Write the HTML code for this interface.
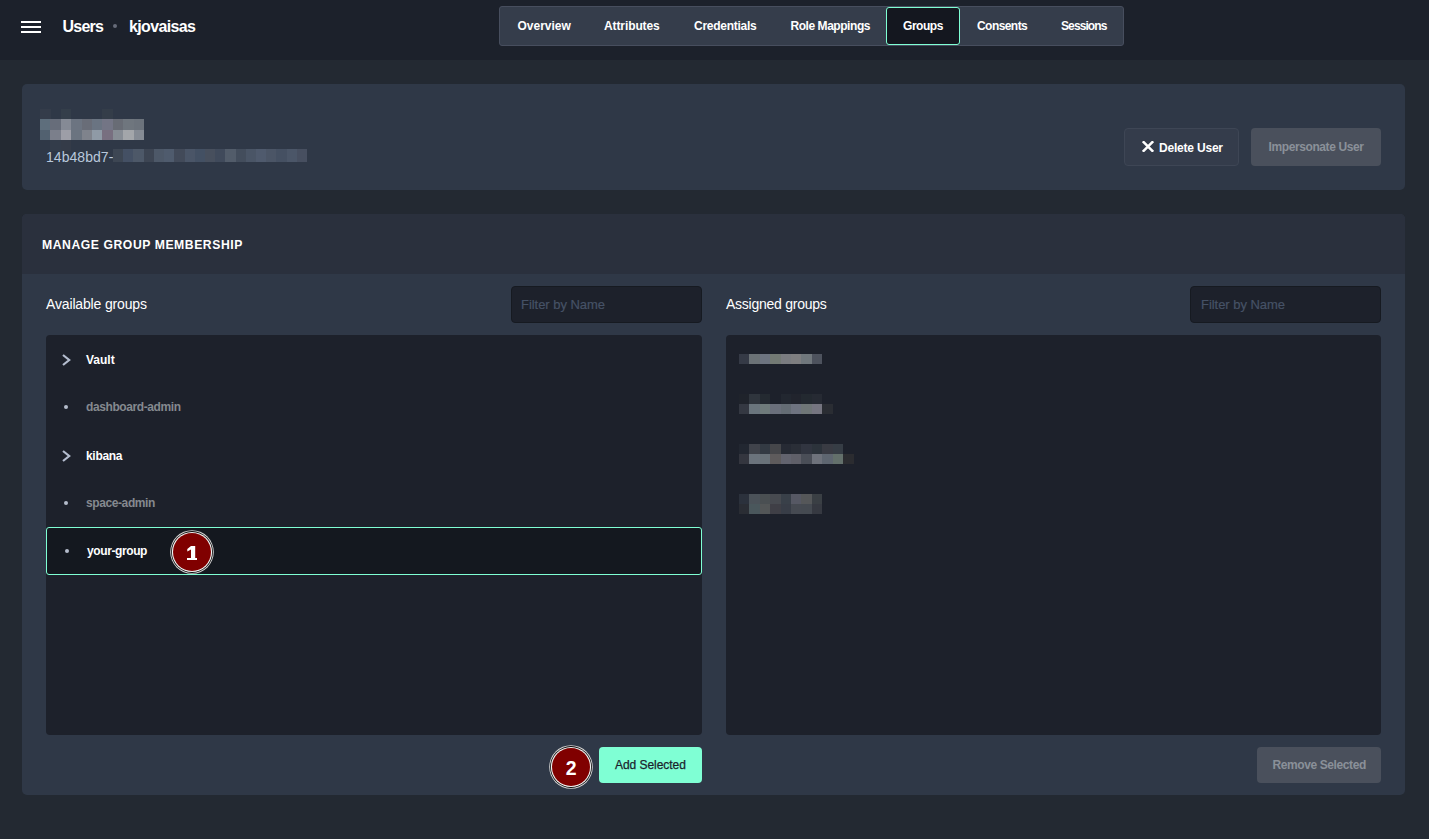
<!DOCTYPE html>
<html>
<head>
<meta charset="utf-8">
<style>
*{box-sizing:border-box;margin:0;padding:0}
html,body{width:1429px;height:839px;overflow:hidden}
body{background:#232932;font-family:"Liberation Sans",sans-serif;position:relative;color:#fff}
.a{position:absolute}
.t{position:absolute;white-space:nowrap}
.b12{font-size:12px;line-height:12px;font-weight:700}
#hdr{left:0;top:0;width:1429px;height:60px;background:#1c212b}
.hb{position:absolute;left:21px;width:20px;height:2px;background:#fff}
#tabs{left:499px;top:6px;width:625px;height:40px;background:#353d4b;border:1px solid #474e5e;border-radius:3px}
#acttab{left:886px;top:7px;width:74px;height:38px;background:#14171f;border:1px solid #7fffd4;border-radius:3px}
.card{position:absolute;left:22px;width:1383px;background:#2f3847;border-radius:5px;overflow:hidden}
.blk{position:absolute;height:11px}
.btn{position:absolute;border-radius:4px}
.inp{position:absolute;width:191px;height:37px;top:286px;background:#1d212b;border:1px solid #161a21;border-radius:4px}
.ph{font-size:13px;line-height:13px;color:#465266;-webkit-text-stroke:0.2px #465266}
.panel{position:absolute;top:335px;height:400px;width:656px;background:#1d212b;border-radius:4px}
.chev{position:absolute;left:62px;width:9px;height:12px}
.dot{position:absolute;width:4.6px;height:4.6px;border-radius:50%;background:#b4bccc}
.badge{position:absolute;width:44px;height:44px;border-radius:50%;border:1px solid #d8d8d8;background:#161a22}
.badge .in{position:absolute;left:2px;top:2px;width:38px;height:38px;border-radius:50%;background:#800000;border:1.5px solid #fff}
.badge .n{position:absolute;left:0;top:0;width:38px;height:38px;text-align:center;font-weight:700;color:#fff}
</style>
</head>
<body>
<!-- header -->
<div id="hdr" class="a"></div>
<div class="hb" style="top:21px"></div>
<div class="hb" style="top:26px"></div>
<div class="hb" style="top:31px"></div>
<div class="t" style="left:62.5px;top:19.3px;font-size:16px;line-height:16px;font-weight:700;letter-spacing:-0.75px">Users</div>
<div class="a" style="left:113px;top:24px;width:4px;height:4px;border-radius:50%;background:#666b79"></div>
<div class="t" style="left:129px;top:19.3px;font-size:16px;line-height:16px;font-weight:700;letter-spacing:-0.65px">kjovaisas</div>

<!-- tabs -->
<div id="tabs" class="a"></div>
<div id="acttab" class="a"></div>
<div class="t b12" style="left:517.5px;top:19.8px">Overview</div>
<div class="t b12" style="left:604px;top:19.8px;letter-spacing:-0.1px">Attributes</div>
<div class="t b12" style="left:694px;top:19.8px;letter-spacing:-0.27px">Credentials</div>
<div class="t b12" style="left:790.5px;top:19.8px;letter-spacing:-0.45px">Role Mappings</div>
<div class="t b12" style="left:903px;top:19.8px;letter-spacing:-0.45px">Groups</div>
<div class="t b12" style="left:977px;top:19.8px;letter-spacing:-0.56px">Consents</div>
<div class="t b12" style="left:1061px;top:19.8px;letter-spacing:-0.9px">Sessions</div>

<!-- card 1 -->
<div class="card" style="top:84px;height:106px"></div>
<div class="a" style="left:40.0px;top:109.0px;width:10.7px;height:10.4px;background:#343c4a"></div>
<div class="a" style="left:60.8px;top:109.0px;width:10.7px;height:10.4px;background:#343e4a"></div>
<div class="a" style="left:102.4px;top:109.0px;width:10.7px;height:10.4px;background:#343d49"></div>
<div class="a" style="left:40.0px;top:119.4px;width:10.7px;height:10.4px;background:#5e6e7c"></div>
<div class="a" style="left:50.4px;top:119.4px;width:10.7px;height:10.4px;background:#676d7a"></div>
<div class="a" style="left:60.8px;top:119.4px;width:10.7px;height:10.4px;background:#858a95"></div>
<div class="a" style="left:71.2px;top:119.4px;width:10.7px;height:10.4px;background:#6c7481"></div>
<div class="a" style="left:81.6px;top:119.4px;width:10.7px;height:10.4px;background:#696d78"></div>
<div class="a" style="left:92.0px;top:119.4px;width:10.7px;height:10.4px;background:#6a7482"></div>
<div class="a" style="left:102.4px;top:119.4px;width:10.7px;height:10.4px;background:#737585"></div>
<div class="a" style="left:112.8px;top:119.4px;width:10.7px;height:10.4px;background:#686c75"></div>
<div class="a" style="left:123.2px;top:119.4px;width:10.7px;height:10.4px;background:#6f767e"></div>
<div class="a" style="left:133.6px;top:119.4px;width:10.7px;height:10.4px;background:#6c737c"></div>
<div class="a" style="left:40.0px;top:129.8px;width:10.7px;height:10.4px;background:#526170"></div>
<div class="a" style="left:50.4px;top:129.8px;width:10.7px;height:10.4px;background:#7b7f8b"></div>
<div class="a" style="left:60.8px;top:129.8px;width:10.7px;height:10.4px;background:#9d9ea7"></div>
<div class="a" style="left:71.2px;top:129.8px;width:10.7px;height:10.4px;background:#6b7480"></div>
<div class="a" style="left:81.6px;top:129.8px;width:10.7px;height:10.4px;background:#7f838c"></div>
<div class="a" style="left:92.0px;top:129.8px;width:10.7px;height:10.4px;background:#8f9aa6"></div>
<div class="a" style="left:102.4px;top:129.8px;width:10.7px;height:10.4px;background:#786f80"></div>
<div class="a" style="left:112.8px;top:129.8px;width:10.7px;height:10.4px;background:#878d95"></div>
<div class="a" style="left:123.2px;top:129.8px;width:10.7px;height:10.4px;background:#a3a6aa"></div>
<div class="a" style="left:133.6px;top:129.8px;width:10.7px;height:10.4px;background:#858b94"></div>
<div class="a" style="left:50.4px;top:140.2px;width:10.7px;height:10.4px;background:#333c4a"></div>
<div class="a" style="left:60.8px;top:140.2px;width:10.7px;height:10.4px;background:#343b48"></div>
<div class="t" style="left:46px;top:149.7px;font-size:14px;line-height:14px;color:#b9c8dc;letter-spacing:0.05px">14b48bd7-</div>
<div class="a" style="left:113.0px;top:149.0px;width:10.5px;height:13.0px;background:#3d4653"></div>
<div class="a" style="left:123.2px;top:149.0px;width:10.5px;height:13.0px;background:#445064"></div>
<div class="a" style="left:133.4px;top:149.0px;width:10.5px;height:13.0px;background:#4d5868"></div>
<div class="a" style="left:143.6px;top:149.0px;width:10.5px;height:13.0px;background:#3d4553"></div>
<div class="a" style="left:153.8px;top:149.0px;width:10.5px;height:13.0px;background:#4d5868"></div>
<div class="a" style="left:164.1px;top:149.0px;width:10.5px;height:13.0px;background:#4f5b6d"></div>
<div class="a" style="left:174.3px;top:149.0px;width:10.5px;height:13.0px;background:#424a59"></div>
<div class="a" style="left:184.5px;top:149.0px;width:10.5px;height:13.0px;background:#4a5567"></div>
<div class="a" style="left:194.7px;top:149.0px;width:10.5px;height:13.0px;background:#435063"></div>
<div class="a" style="left:204.9px;top:149.0px;width:10.5px;height:13.0px;background:#474f5d"></div>
<div class="a" style="left:215.1px;top:149.0px;width:10.5px;height:13.0px;background:#404a5b"></div>
<div class="a" style="left:225.3px;top:149.0px;width:10.5px;height:13.0px;background:#525c6a"></div>
<div class="a" style="left:235.5px;top:149.0px;width:10.5px;height:13.0px;background:#434d5c"></div>
<div class="a" style="left:245.7px;top:149.0px;width:10.5px;height:13.0px;background:#4a5566"></div>
<div class="a" style="left:255.9px;top:149.0px;width:10.5px;height:13.0px;background:#4f5a6d"></div>
<div class="a" style="left:266.1px;top:149.0px;width:10.5px;height:13.0px;background:#4b5566"></div>
<div class="a" style="left:276.4px;top:149.0px;width:10.5px;height:13.0px;background:#455062"></div>
<div class="a" style="left:286.6px;top:149.0px;width:10.5px;height:13.0px;background:#4b5668"></div>
<div class="a" style="left:296.8px;top:149.0px;width:10.5px;height:13.0px;background:#474f60"></div>

<div class="btn" style="left:1124px;top:128px;width:115px;height:38px;background:#343c4b;border:1px solid #3e4655"></div>
<svg class="a" style="left:1142px;top:141.4px" width="12" height="11" viewBox="0 0 12 11"><path d="M0.8 0.3 L11.2 10.7 M11.2 0.3 L0.8 10.7" stroke="#fff" stroke-width="2.5" stroke-linecap="butt"/></svg>
<div class="t b12" style="left:1159px;top:141.6px;letter-spacing:-0.2px">Delete User</div>
<div class="btn" style="left:1251px;top:128px;width:130px;height:38px;background:#4a505c"></div>
<div class="t b12" style="left:1268.5px;top:140.8px;color:#8a9099;letter-spacing:-0.4px">Impersonate User</div>

<!-- card 2 -->
<div class="card" style="top:214px;height:581px">
  <div class="a" style="left:0;top:0;width:1383px;height:60px;background:#2a303d"></div>
</div>
<div class="t" style="left:42px;top:239px;font-size:12.2px;line-height:12.2px;font-weight:700;letter-spacing:0.56px">MANAGE GROUP MEMBERSHIP</div>

<div class="t" style="left:46px;top:297.1px;font-size:14px;line-height:14px;letter-spacing:-0.15px">Available groups</div>
<div class="inp" style="left:511px"></div>
<div class="t ph" style="left:521px;top:298px;letter-spacing:-0.04px">Filter by Name</div>

<div class="t" style="left:726px;top:297.1px;font-size:14px;line-height:14px;letter-spacing:-0.25px">Assigned groups</div>
<div class="inp" style="left:1190px"></div>
<div class="t ph" style="left:1201px;top:298px;letter-spacing:-0.04px">Filter by Name</div>

<div class="panel" style="left:46px"></div>
<div class="panel" style="left:726px;width:655px"></div>

<!-- available list -->
<svg class="chev" style="top:354px" viewBox="0 0 9 12"><path d="M1 1 L7.2 6 L1 11" fill="none" stroke="#b4bdcf" stroke-width="2.2"/></svg>
<div class="t b12" style="left:86px;top:353.8px">Vault</div>
<div class="dot" style="left:63.5px;top:404.5px"></div>
<div class="t b12" style="left:86px;top:400.8px;color:#85898f;letter-spacing:-0.4px">dashboard-admin</div>
<svg class="chev" style="top:450px" viewBox="0 0 9 12"><path d="M1 1 L7.2 6 L1 11" fill="none" stroke="#b4bdcf" stroke-width="2.2"/></svg>
<div class="t b12" style="left:86px;top:449.8px;letter-spacing:-0.3px">kibana</div>
<div class="dot" style="left:63.5px;top:500.5px"></div>
<div class="t b12" style="left:86px;top:496.8px;color:#85898f;letter-spacing:-0.4px">space-admin</div>

<div class="a" style="left:46px;top:527px;width:656px;height:48px;background:#14181f;border:1px solid #7fffd4;border-radius:3px"></div>
<div class="dot" style="left:64.5px;top:548.5px"></div>
<div class="t b12" style="left:87px;top:544.8px;letter-spacing:-0.4px">your-group</div>

<svg class="a" style="left:170px;top:530px" width="44" height="44" viewBox="0 0 44 44"><circle cx="22" cy="22" r="21.8" fill="#d6d6d6"/><circle cx="22" cy="22" r="20.9" fill="#0a0a0a"/><circle cx="22" cy="22" r="20.1" fill="#f4f4f4"/><circle cx="22" cy="22" r="19" fill="#800000"/><path d="M21 16 L25.2 16 L25.2 28 L27 28 L27 30 L17 30 L17 28 L21 28 L21 19.6 L17.3 21.4 L17.3 19 Z" fill="#fff"/></svg>

<!-- assigned list -->
<div class="a" style="left:739.0px;top:354.0px;width:10.7px;height:10.0px;background:#353a46"></div>
<div class="a" style="left:749.4px;top:354.0px;width:10.7px;height:10.0px;background:#6b7276"></div>
<div class="a" style="left:759.8px;top:354.0px;width:10.7px;height:10.0px;background:#6d7480"></div>
<div class="a" style="left:770.2px;top:354.0px;width:10.7px;height:10.0px;background:#737a74"></div>
<div class="a" style="left:780.6px;top:354.0px;width:10.7px;height:10.0px;background:#7a7c80"></div>
<div class="a" style="left:791.0px;top:354.0px;width:10.7px;height:10.0px;background:#7e7e80"></div>
<div class="a" style="left:801.4px;top:354.0px;width:10.7px;height:10.0px;background:#70777c"></div>
<div class="a" style="left:811.8px;top:354.0px;width:10.7px;height:10.0px;background:#4d525d"></div>
<div class="a" style="left:739.0px;top:394.0px;width:10.7px;height:10.0px;background:#1f232b"></div>
<div class="a" style="left:749.4px;top:394.0px;width:10.7px;height:10.0px;background:#2f353d"></div>
<div class="a" style="left:759.8px;top:394.0px;width:10.7px;height:10.0px;background:#242a31"></div>
<div class="a" style="left:780.6px;top:394.0px;width:10.7px;height:10.0px;background:#222730"></div>
<div class="a" style="left:791.0px;top:394.0px;width:10.7px;height:10.0px;background:#21242d"></div>
<div class="a" style="left:801.4px;top:394.0px;width:10.7px;height:10.0px;background:#232930"></div>
<div class="a" style="left:811.8px;top:394.0px;width:10.7px;height:10.0px;background:#262a33"></div>
<div class="a" style="left:739.0px;top:404.0px;width:10.7px;height:10.0px;background:#343842"></div>
<div class="a" style="left:749.4px;top:404.0px;width:10.7px;height:10.0px;background:#6a757d"></div>
<div class="a" style="left:759.8px;top:404.0px;width:10.7px;height:10.0px;background:#6f7b7b"></div>
<div class="a" style="left:770.2px;top:404.0px;width:10.7px;height:10.0px;background:#6a6f7b"></div>
<div class="a" style="left:780.6px;top:404.0px;width:10.7px;height:10.0px;background:#646c74"></div>
<div class="a" style="left:791.0px;top:404.0px;width:10.7px;height:10.0px;background:#6e7380"></div>
<div class="a" style="left:801.4px;top:404.0px;width:10.7px;height:10.0px;background:#6f7677"></div>
<div class="a" style="left:811.8px;top:404.0px;width:10.7px;height:10.0px;background:#757580"></div>
<div class="a" style="left:822.2px;top:404.0px;width:10.7px;height:10.0px;background:#2a2d33"></div>
<div class="a" style="left:739.0px;top:444.0px;width:10.7px;height:10.0px;background:#222731"></div>
<div class="a" style="left:749.4px;top:444.0px;width:10.7px;height:10.0px;background:#40434b"></div>
<div class="a" style="left:759.8px;top:444.0px;width:10.7px;height:10.0px;background:#333a43"></div>
<div class="a" style="left:770.2px;top:444.0px;width:10.7px;height:10.0px;background:#45464a"></div>
<div class="a" style="left:780.6px;top:444.0px;width:10.7px;height:10.0px;background:#262a34"></div>
<div class="a" style="left:791.0px;top:444.0px;width:10.7px;height:10.0px;background:#2a2e37"></div>
<div class="a" style="left:801.4px;top:444.0px;width:10.7px;height:10.0px;background:#313540"></div>
<div class="a" style="left:811.8px;top:444.0px;width:10.7px;height:10.0px;background:#2c333b"></div>
<div class="a" style="left:822.2px;top:444.0px;width:10.7px;height:10.0px;background:#393b43"></div>
<div class="a" style="left:832.6px;top:444.0px;width:10.7px;height:10.0px;background:#363d45"></div>
<div class="a" style="left:739.0px;top:454.0px;width:10.7px;height:10.0px;background:#34363f"></div>
<div class="a" style="left:749.4px;top:454.0px;width:10.7px;height:10.0px;background:#6b737c"></div>
<div class="a" style="left:759.8px;top:454.0px;width:10.7px;height:10.0px;background:#697279"></div>
<div class="a" style="left:770.2px;top:454.0px;width:10.7px;height:10.0px;background:#5e5b5c"></div>
<div class="a" style="left:780.6px;top:454.0px;width:10.7px;height:10.0px;background:#62636e"></div>
<div class="a" style="left:791.0px;top:454.0px;width:10.7px;height:10.0px;background:#5f5f68"></div>
<div class="a" style="left:801.4px;top:454.0px;width:10.7px;height:10.0px;background:#4a4e57"></div>
<div class="a" style="left:811.8px;top:454.0px;width:10.7px;height:10.0px;background:#6e727b"></div>
<div class="a" style="left:822.2px;top:454.0px;width:10.7px;height:10.0px;background:#5e6670"></div>
<div class="a" style="left:832.6px;top:454.0px;width:10.7px;height:10.0px;background:#63706b"></div>
<div class="a" style="left:843.0px;top:454.0px;width:10.7px;height:10.0px;background:#2b2c30"></div>
<div class="a" style="left:739.0px;top:494.0px;width:10.7px;height:10.0px;background:#2b313c"></div>
<div class="a" style="left:749.4px;top:494.0px;width:10.7px;height:10.0px;background:#4b5259"></div>
<div class="a" style="left:759.8px;top:494.0px;width:10.7px;height:10.0px;background:#4a4f52"></div>
<div class="a" style="left:770.2px;top:494.0px;width:10.7px;height:10.0px;background:#474a50"></div>
<div class="a" style="left:780.6px;top:494.0px;width:10.7px;height:10.0px;background:#394049"></div>
<div class="a" style="left:791.0px;top:494.0px;width:10.7px;height:10.0px;background:#565864"></div>
<div class="a" style="left:801.4px;top:494.0px;width:10.7px;height:10.0px;background:#555759"></div>
<div class="a" style="left:811.8px;top:494.0px;width:10.7px;height:10.0px;background:#3a3f44"></div>
<div class="a" style="left:739.0px;top:504.0px;width:10.7px;height:10.0px;background:#2a2d34"></div>
<div class="a" style="left:749.4px;top:504.0px;width:10.7px;height:10.0px;background:#4a575c"></div>
<div class="a" style="left:759.8px;top:504.0px;width:10.7px;height:10.0px;background:#535657"></div>
<div class="a" style="left:770.2px;top:504.0px;width:10.7px;height:10.0px;background:#3f3f46"></div>
<div class="a" style="left:780.6px;top:504.0px;width:10.7px;height:10.0px;background:#383d47"></div>
<div class="a" style="left:791.0px;top:504.0px;width:10.7px;height:10.0px;background:#464a52"></div>
<div class="a" style="left:801.4px;top:504.0px;width:10.7px;height:10.0px;background:#454a51"></div>
<div class="a" style="left:811.8px;top:504.0px;width:10.7px;height:10.0px;background:#363941"></div>

<div class="btn" style="left:599px;top:747px;width:103px;height:36px;background:#7fffd4"></div>
<div class="t" style="left:615px;top:758.8px;font-size:12px;line-height:12px;color:#1b1f2d;letter-spacing:-0.05px;-webkit-text-stroke:0.25px #1b1f2d">Add Selected</div>
<svg class="a" style="left:549.2px;top:745px" width="44" height="44" viewBox="0 0 44 44"><circle cx="22" cy="22" r="21.8" fill="#d6d6d6"/><circle cx="22" cy="22" r="20.9" fill="#0a0a0a"/><circle cx="22" cy="22" r="20.1" fill="#f4f4f4"/><circle cx="22" cy="22" r="19" fill="#800000"/></svg>
<div class="t" style="left:549.7px;top:758px;width:44px;text-align:center;font-size:19.5px;line-height:20px;font-weight:700;color:#fff;padding-right:1px">2</div>

<div class="btn" style="left:1257px;top:747px;width:124px;height:36px;background:#4a505c"></div>
<div class="t b12" style="left:1272.5px;top:759px;color:#8a9099;letter-spacing:-0.4px">Remove Selected</div>
</body>
</html>
